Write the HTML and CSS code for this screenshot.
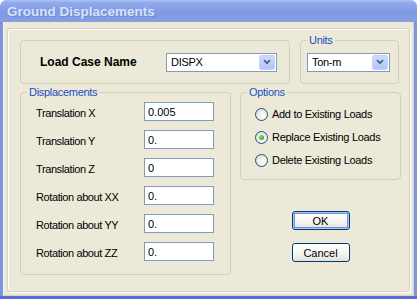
FILE: index.html
```html
<!DOCTYPE html>
<html lang="en">
<head>
<meta charset="UTF-8">
<title>Ground Displacements</title>
<link rel="stylesheet" href="styles.css">
</head>
<body>
<div class="window">
  <div class="titlebar">Ground Displacements</div>

  <div class="client">
    <div class="frame">

      <!-- load case + units -->
      <div class="top-row">
        <div class="group loadcase">
          <span class="loadcase-label">Load Case Name</span>
          <div class="combo combo-case">
            <span class="combo-text">DISPX</span>
            <span class="combo-btn"><svg width="8" height="6" viewBox="0 0 8 6"><path d="M1 1.2 L4 4.2 L7 1.2" fill="none" stroke="#4d6185" stroke-width="1.8"/></svg></span>
          </div>
        </div>
        <div class="group units">
          <span class="group-title">Units</span>
          <div class="combo combo-units">
            <span class="combo-text">Ton-m</span>
            <span class="combo-btn"><svg width="8" height="6" viewBox="0 0 8 6"><path d="M1 1.2 L4 4.2 L7 1.2" fill="none" stroke="#4d6185" stroke-width="1.8"/></svg></span>
          </div>
        </div>
      </div>

      <div class="main-row">
        <!-- displacements -->
        <div class="group displacements">
          <span class="group-title">Displacements</span>
          <div class="field"><label>Translation X</label><input type="text" value="0.005"></div>
          <div class="field"><label>Translation Y</label><input type="text" value="0."></div>
          <div class="field"><label>Translation Z</label><input type="text" value="0"></div>
          <div class="field"><label>Rotation about XX</label><input type="text" value="0."></div>
          <div class="field"><label>Rotation about YY</label><input type="text" value="0."></div>
          <div class="field"><label>Rotation about ZZ</label><input type="text" value="0."></div>
        </div>

        <!-- options + buttons -->
        <div class="side">
          <div class="group options">
            <span class="group-title">Options</span>
            <div class="radio-row"><span class="radio"></span>Add to Existing Loads</div>
            <div class="radio-row"><span class="radio checked"></span>Replace Existing Loads</div>
            <div class="radio-row"><span class="radio"></span>Delete Existing Loads</div>
          </div>
          <button class="btn btn-default">OK</button>
          <button class="btn btn-cancel">Cancel</button>
        </div>
      </div>

    </div>
  </div>
</div>
</body>
</html>
```

FILE: styles.css
```css
*{box-sizing:border-box;}
body{margin:0;background:#fff;font-family:"Liberation Sans", Arial, sans-serif;font-size:11px;color:#000;}

.window{
  width:417px;height:299px;display:flex;flex-direction:column;
  background:#7d93e0;border-radius:7px 7px 0 0;overflow:hidden;
  border-bottom:3px solid #5a6bd6;
}
.titlebar{
  height:22px;flex:none;padding:3px 0 0 7px;
  background:linear-gradient(#b0c3f2 0, #93aaec 12%, #7f99e2 55%, #86a0e6 100%);
  color:#d8e3f8;font-weight:bold;font-size:13.5px;line-height:18px;
  text-shadow:1px 1px 0 rgba(100,124,210,0.6);
}
.client{
  flex:1;margin:0 3px;background:#ece9d8;padding:6px 4px 4px 4px;
  box-shadow:inset 1px 0 0 #f7f6ef, inset -1px -1px 0 #d6d3c4;
}
.frame{
  height:100%;padding:11px 0 0 12px;
  border:1px solid #d3d0c1;border-radius:3px;
  box-shadow:1px 1px 0 #fff, inset 1px 1px 0 #fff;
}

.group{position:relative;border:1px solid #d0d0bf;border-radius:4px;}
.group-title{
  position:absolute;top:-7px;left:6px;padding:0 2px;line-height:13px;
  background:#ece9d8;color:#1a4fc4;letter-spacing:-0.3px;
}

.top-row{display:flex;gap:10px;}
.loadcase{
  width:270px;height:44px;display:flex;align-items:center;justify-content:space-between;
  padding:0 12px 0 19px;
}
.loadcase-label{font-weight:bold;font-size:12px;}
.units{width:99px;height:44px;display:flex;align-items:center;padding:0 8px 0 6px;}

.combo{
  height:19px;display:flex;align-items:stretch;background:#fff;border:1px solid #7f9db9;
}
.combo-case{width:111px;}
.combo-units{width:83px;}
.combo-text{flex:1;padding-left:4px;line-height:17px;letter-spacing:-0.3px;}
.combo-btn{
  width:16px;margin:1px;display:flex;align-items:center;justify-content:center;
  background:linear-gradient(#cddafc, #b2c6f5);border:1px solid #c4d3f8;border-radius:2px;
}

.main-row{display:flex;gap:9px;margin-top:8px;}
.displacements{
  width:211px;display:flex;flex-direction:column;gap:9px;padding:9px 0 13px 15px;
}
.field{display:flex;align-items:center;height:19px;}
.field label{width:108px;padding-top:2px;letter-spacing:-0.4px;}
.field input{
  width:70px;height:19px;border:1px solid #7f9db9;padding:0 3px;margin:0;
  font:11px "Liberation Sans", Arial, sans-serif;color:#000;outline:none;
}

.side{width:161px;display:flex;flex-direction:column;align-items:center;}
.options{width:161px;display:flex;flex-direction:column;gap:1px;padding:10px 0 8px 14px;}
.radio-row{height:22px;display:flex;align-items:center;gap:4px;letter-spacing:-0.3px;}
.radio{
  width:13px;height:13px;border-radius:50%;border:1px solid #1c5180;flex:none;
  background:radial-gradient(circle at 65% 65%, #ffffff 0, #f2f1ea 40%, #d6d4c8 100%);
  display:flex;align-items:center;justify-content:center;
}
.radio.checked::after{
  content:"";width:5px;height:5px;border-radius:50%;
  background:radial-gradient(circle at 35% 35%, #6ee06a, #21a121);
}

.btn{
  width:58px;height:19px;padding:0;margin:0;
  font:11px "Liberation Sans", Arial, sans-serif;color:#000;
  border:1px solid #003c74;border-radius:3px;
  background:linear-gradient(#ffffff 0, #f5f4ef 60%, #e3e1d6 100%);
}
.btn-default{margin-top:31px;box-shadow:inset 0 0 0 1px #aecaf0, inset 0 0 0 2px #6c8ee6;}
.btn-cancel{margin-top:13px;}
```
